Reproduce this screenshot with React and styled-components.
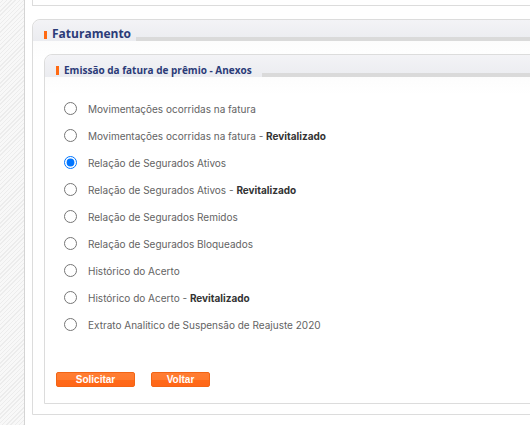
import React from "react";
import styled, { createGlobalStyle } from "styled-components";

const GlobalStyle = createGlobalStyle`
  html, body {
    margin: 0;
    padding: 0;
    background: #fff;
    font-family: "Open Sans", "Liberation Sans", Arial, sans-serif;
  }
  #root {
    width: 530px;
    height: 425px;
    overflow: hidden;
  }
`;

const Page = styled.div`
  display: flex;
  height: 425px;
`;

const Sidebar = styled.div`
  width: 24px;
  flex-shrink: 0;
  border-right: 1px solid #d4d4d4;
  background: repeating-linear-gradient(
    -45deg,
    #ececec 0px,
    #ececec 1px,
    #f8f8f8 1px,
    #f8f8f8 3px
  );
`;

const Content = styled.div`
  flex: 1;
  padding-left: 7px;
  display: flex;
  flex-direction: column;
  gap: 13px;
`;

const TopCard = styled.div`
  height: 5px;
  width: 560px;
  border-left: 1px solid #dcdcdc;
  border-bottom: 1px solid #dcdcdc;
  flex-shrink: 0;
`;

const Card = styled.div`
  width: ${(p) => p.$width}px;
  border: 1px solid #dcdcdc;
  border-radius: 8px 0 0 0;
  background: linear-gradient(#f9f9f9 0, #fff 40px);
  padding-bottom: ${(p) => p.$padBottom}px;
  box-sizing: border-box;
`;

const CardHeader = styled.div`
  display: flex;
  align-items: flex-end;
  height: ${(p) => p.$height}px;
  padding-left: 11px;
  border-radius: 8px 0 0 0;
  background: linear-gradient(#f3f3f6, #ebecf0);
  box-sizing: border-box;
`;

const Marker = styled.span`
  width: 3px;
  height: ${(p) => p.$size}px;
  background: #ff6a13;
  margin-bottom: ${(p) => p.$lift}px;
  flex-shrink: 0;
`;

const Title = styled.span`
  color: #2b3b78;
  font-weight: 700;
  font-size: ${(p) => p.$size}px;
  line-height: 1;
  margin-left: 5px;
  padding-bottom: ${(p) => p.$lift}px;
  white-space: nowrap;
  font-family: "Open Sans", "Liberation Sans", Arial, sans-serif;
`;

const TitleLine = styled.span`
  flex: 1;
  height: 4px;
  background: #dadada;
  margin-left: ${(p) => p.$gap}px;
`;

const CardBody = styled.div`
  padding: 13px 0 0 11px;
`;

const Options = styled.div`
  display: flex;
  flex-direction: column;
  padding: 18px 0 0 19px;
`;

const Option = styled.label`
  display: flex;
  align-items: center;
  height: 27px;
  font-size: 10px;
  color: #636363;
  font-family: "Inter", "Liberation Sans", Arial, sans-serif;

  input {
    margin: 0 11px 0 0;
    width: 13px;
    height: 13px;
  }

  b {
    color: #333;
    font-weight: 700;
  }
`;

const Actions = styled.div`
  display: flex;
  align-items: flex-start;
  gap: 16px;
  height: 15px;
  padding: 34px 0 0 11px;
`;

const Button = styled.button`
  width: ${(p) => p.$width}px;
  height: 15px;
  padding: 0;
  border: 1px solid #f26515;
  border-radius: 2px;
  background: linear-gradient(#ff7d33 0, #ff7a2e 50%, #ff6a19 50%, #ff6618 100%);
  color: #fff;
  font-weight: 700;
  font-size: 10px;
  line-height: 13px;
  font-family: "Liberation Sans", Arial, sans-serif;
  cursor: pointer;
`;

const options = [
  ["Movimentações ocorridas na fatura", false],
  ["Movimentações ocorridas na fatura", true],
  ["Relação de Segurados Ativos", false],
  ["Relação de Segurados Ativos", true],
  ["Relação de Segurados Remidos", false],
  ["Relação de Segurados Bloqueados", false],
  ["Histórico do Acerto", false],
  ["Histórico do Acerto", true],
  ["Extrato Analitico de Suspensão de Reajuste 2020", false],
];

export default function App() {
  return (
    <Page>
      <GlobalStyle />
      <Sidebar />
      <Content>
        <TopCard />
        <Card $width={520} $padBottom={10}>
          <CardHeader $height={21}>
            <Marker $size={8} $lift={2} />
            <Title $size={12} $lift={1}>Faturamento</Title>
            <TitleLine $gap={5} />
          </CardHeader>
          <CardBody>
            <Card $width={520} $padBottom={16}>
              <CardHeader $height={22}>
                <Marker $size={9} $lift={2} />
                <Title $size={10} $lift={2}>Emissão da fatura de prêmio - Anexos</Title>
                <TitleLine $gap={10} />
              </CardHeader>
              <Options>
                {options.map(([label, revit], i) => (
                  <Option key={i}>
                    <input type="radio" name="anexo" defaultChecked={i === 2} />
                    <span>
                      {label}
                      {revit && (
                        <>
                          {" - "}
                          <b>Revitalizado</b>
                        </>
                      )}
                    </span>
                  </Option>
                ))}
              </Options>
              <Actions>
                <Button $width={79}>Solicitar</Button>
                <Button $width={59}>Voltar</Button>
              </Actions>
            </Card>
          </CardBody>
        </Card>
      </Content>
    </Page>
  );
}
